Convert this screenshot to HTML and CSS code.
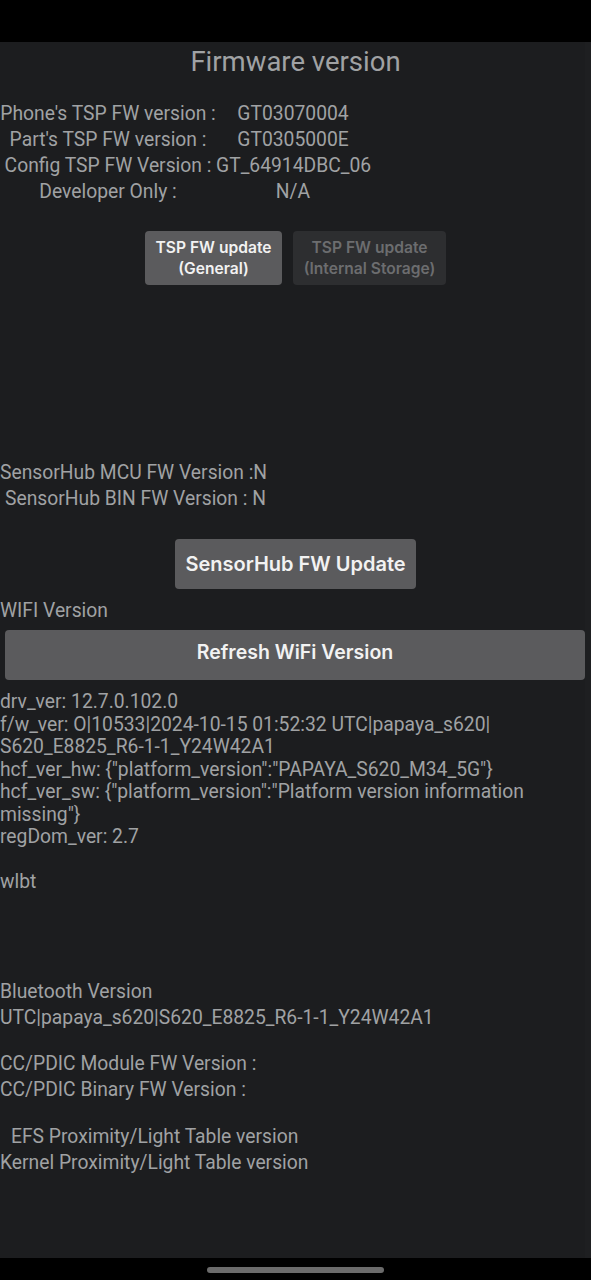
FILE: index.html
```html
<!DOCTYPE html>
<html>
<head>
<meta charset="utf-8">
<link rel="stylesheet" href="styles.css">
</head>
<body>
<div class="statusbar"></div>
<main class="screen">
  <h1 class="title">Firmware version</h1>
  <div class="tsp-table">
    <span class="lbl">Phone's TSP FW version :</span><span class="val">GT03070004</span>
    <span class="lbl">Part's TSP FW version :</span><span class="val">GT0305000E</span>
    <span class="lbl">Config TSP FW Version :</span><span class="val">GT_64914DBC_06</span>
    <span class="lbl">Developer Only :</span><span class="val">N/A</span>
  </div>
  <div class="tsp-buttons">
    <button class="btn btn-small">TSP FW update<br>(General)</button>
    <button class="btn btn-small btn-disabled">TSP FW update<br>(Internal Storage)</button>
  </div>
  <div class="sensorhub">
    <div>SensorHub MCU FW Version :N</div>
    <div>SensorHub BIN FW Version : N</div>
  </div>
  <div class="center-row">
    <button class="btn btn-large btn-sensor">SensorHub FW Update</button>
  </div>
  <div class="line wifi-label">WIFI Version</div>
  <button class="btn btn-large btn-wide">Refresh WiFi Version</button>
  <div class="wifi-info">drv_ver: 12.7.0.102.0<br>f/w_ver: O|10533|2024-10-15 01:52:32 UTC|papaya_s620|<br>S620_E8825_R6-1-1_Y24W42A1<br>hcf_ver_hw: {"platform_version":"PAPAYA_S620_M34_5G"}<br>hcf_ver_sw: {"platform_version":"Platform version information<br>missing"}<br>regDom_ver: 2.7<br><br>wlbt</div>
  <div class="bt">
    <div class="line">Bluetooth Version</div>
    <div class="line">UTC|papaya_s620|S620_E8825_R6-1-1_Y24W42A1</div>
  </div>
  <div class="ccpdic">
    <div class="line">CC/PDIC Module FW Version :</div>
    <div class="line">CC/PDIC Binary FW Version :</div>
  </div>
  <div class="prox">
    <div class="line prox-efs">EFS Proximity/Light Table version</div>
    <div class="line">Kernel Proximity/Light Table version</div>
  </div>
</main>
<div class="navbar"><div class="handle"></div></div>
</body>
</html>
```

FILE: styles.css
```css
* { box-sizing: border-box; }
html, body { margin: 0; padding: 0; background: #000; }
body {
  width: 591px;
  height: 1280px;
  overflow: hidden;
  font-family: Roboto, "Liberation Sans", sans-serif;
  color: #a0a2a4;
}
.statusbar { height: 42px; background: #000; }
.screen {
  height: 1216px;
  background: #1c1d1f;
  border-right: 6px solid #1e1f21;
  padding-top: 4px;
  display: flex;
  flex-direction: column;
  align-items: flex-start;
  font-size: 19.3px;
}
.title {
  align-self: stretch;
  margin: 0;
  padding-left: 6px;
  text-align: center;
  font-size: 27.5px;
  font-weight: 400;
  line-height: 32px;
  color: #a0a2a4;
}
.tsp-table {
  margin-top: 23px;
  display: grid;
  grid-template-columns: 216px 154px;
  line-height: 26px;
  text-align: center;
  white-space: nowrap;
}
.tsp-buttons {
  align-self: center;
  margin-top: 26px;
  display: flex;
  gap: 11px;
  padding-left: 6px;
}
.btn {
  border: none;
  border-radius: 4px;
  background: #5b5b5d;
  color: #f2f2f2;
  font-family: Inter, "Open Sans", sans-serif;
  font-weight: 600;
  padding: 0;
  margin: 0;
}
.btn-small {
  height: 54px;
  font-size: 15.6px;
  line-height: 21px;
  padding: 0 6px;
  white-space: nowrap;
}
.btn-small:first-child { width: 137px; }
.btn-disabled {
  width: 153px;
  background: #2d2e30;
  color: #6c6d6f;
}
.sensorhub {
  margin-top: 175px;
  width: 266px;
  text-align: right;
  line-height: 26px;
  white-space: nowrap;
}
.center-row {
  align-self: stretch;
  display: flex;
  justify-content: center;
  margin-top: 27px;
  padding-left: 6px;
}
.btn-large {
  height: 50px;
  font-size: 20px;
}
.btn-sensor { width: 241px; }
.line { line-height: 26px; white-space: nowrap; }
.wifi-label { margin-top: 9px; }
.btn-wide {
  margin-top: 6px;
  margin-left: 5px;
  width: 580px;
  padding-bottom: 7px;
  font-size: 19.5px;
}
.wifi-info {
  margin-top: 11px;
  line-height: 22.5px;
  white-space: nowrap;
}
.bt { margin-top: 85px; }
.ccpdic { margin-top: 20px; }
.prox { margin-top: 21px; }
.prox-efs { padding-left: 11px; }
.navbar {
  height: 22px;
  background: #000;
  display: flex;
  justify-content: center;
  padding-top: 9px;
}
.handle {
  width: 177px;
  height: 6px;
  border-radius: 3px;
  background: #6b6b6b;
}
```
